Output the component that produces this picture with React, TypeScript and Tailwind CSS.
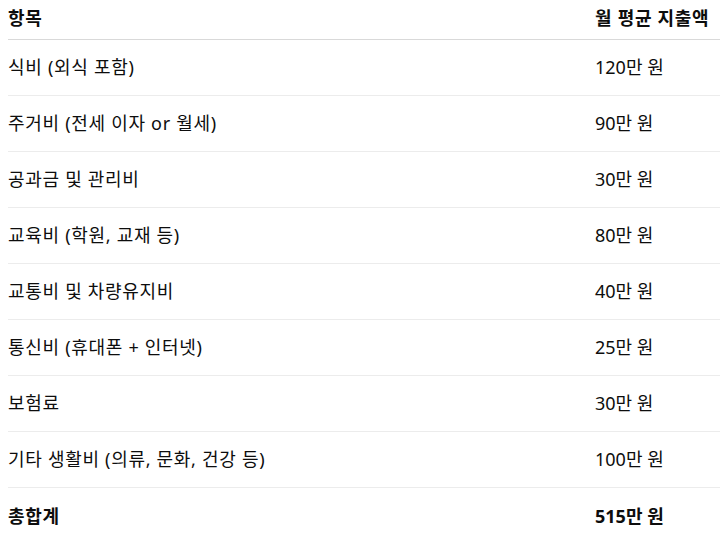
const ROWS: [string, string][] = [
  ["식비 (외식 포함)", "120만 원"],
  ["주거비 (전세 이자 or 월세)", "90만 원"],
  ["공과금 및 관리비", "30만 원"],
  ["교육비 (학원, 교재 등)", "80만 원"],
  ["교통비 및 차량유지비", "40만 원"],
  ["통신비 (휴대폰 + 인터넷)", "25만 원"],
  ["보험료", "30만 원"],
  ["기타 생활비 (의류, 문화, 건강 등)", "100만 원"],
];

export default function App() {
  return (
    <div
      className="w-[720px] h-[548px] bg-white overflow-hidden pl-2 text-[18px] text-[#0d0d0d]"
      style={{ fontFamily: '"Noto Sans", "Noto Sans CJK KR", sans-serif' }}
    >
      <div className="grid grid-cols-[587px_1fr] h-[40px] items-center pb-[3px] border-b border-[#d9d9d9] font-bold tracking-[0.7px]">
        <div>항목</div>
        <div>월 평균 지출액</div>
      </div>
      {ROWS.map(([name, amount]) => (
        <div
          key={name}
          className="grid grid-cols-[587px_1fr] h-[56px] items-center border-b border-[#ececec]"
        >
          <div className="tracking-[0.7px]">{name}</div>
          <div>{amount}</div>
        </div>
      ))}
      <div className="grid grid-cols-[587px_1fr] h-[56px] items-center font-bold">
        <div className="tracking-[0.7px]">총합계</div>
        <div>515만 원</div>
      </div>
    </div>
  );
}
